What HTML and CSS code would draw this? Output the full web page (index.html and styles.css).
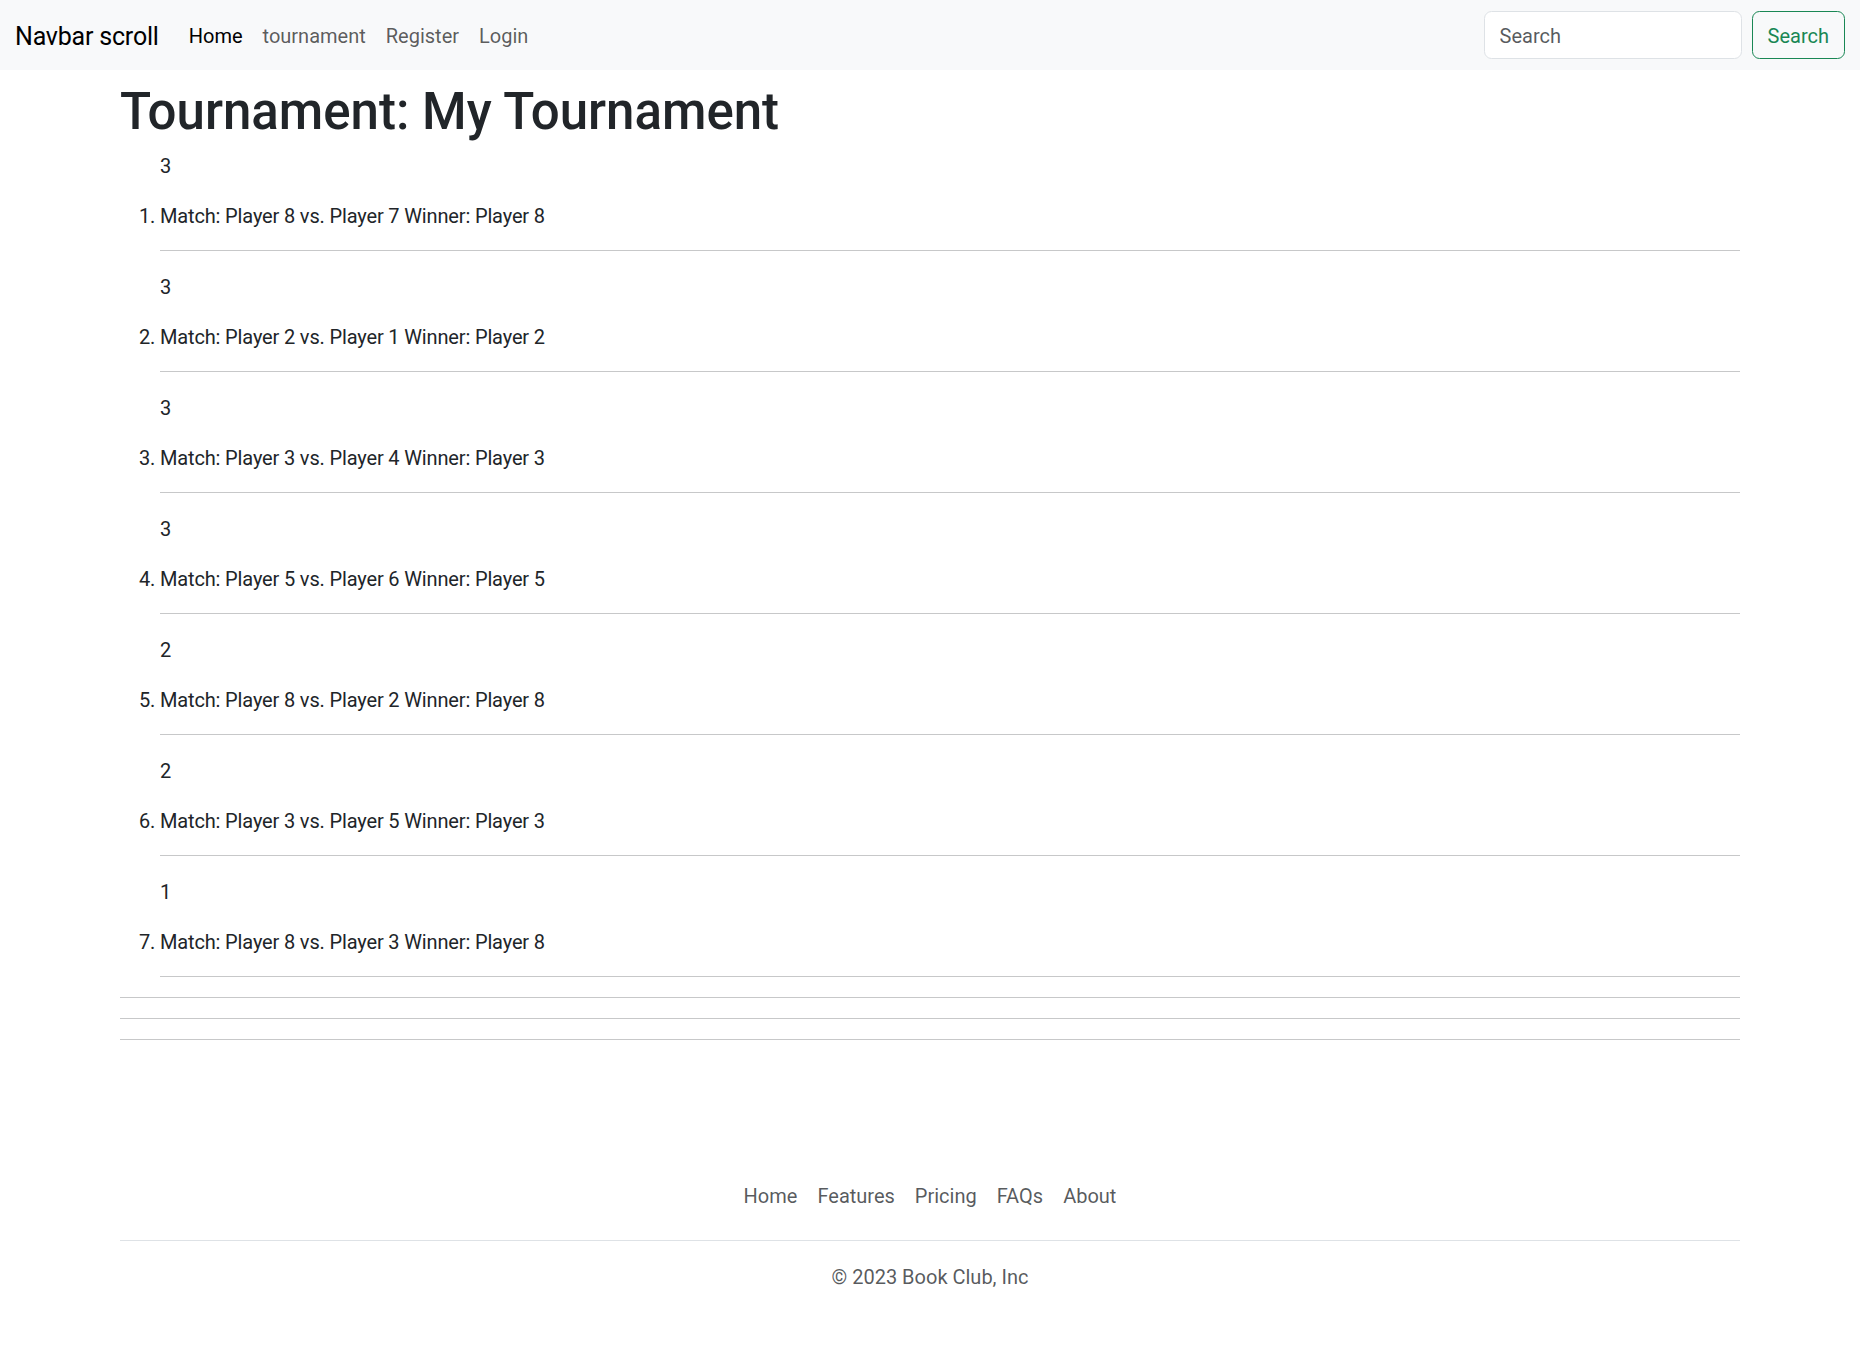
FILE: index.html
```html
<!DOCTYPE html>
<html lang="en">
<head>
<meta charset="utf-8">
<title>Tournament: My Tournament</title>
<link rel="stylesheet" href="styles.css">
</head>
<body>
<nav class="navbar">
  <a class="brand" href="#">Navbar scroll</a>
  <ul class="nav-links">
    <li><a class="nav-link active" href="#">Home</a></li>
    <li><a class="nav-link" href="#">tournament</a></li>
    <li><a class="nav-link" href="#">Register</a></li>
    <li><a class="nav-link" href="#">Login</a></li>
  </ul>
  <form class="search-form">
    <input class="search-input" type="search" placeholder="Search">
    <button class="search-btn" type="button">Search</button>
  </form>
</nav>

<main class="container">
  <h1 class="title">Tournament: My Tournament</h1>
  <ol class="matches">
    <li class="match"><p class="round">3</p><p class="desc">Match: Player 8 vs. Player 7 Winner: Player 8</p><hr class="rule"></li>
    <li class="match"><p class="round">3</p><p class="desc">Match: Player 2 vs. Player 1 Winner: Player 2</p><hr class="rule"></li>
    <li class="match"><p class="round">3</p><p class="desc">Match: Player 3 vs. Player 4 Winner: Player 3</p><hr class="rule"></li>
    <li class="match"><p class="round">3</p><p class="desc">Match: Player 5 vs. Player 6 Winner: Player 5</p><hr class="rule"></li>
    <li class="match"><p class="round">2</p><p class="desc">Match: Player 8 vs. Player 2 Winner: Player 8</p><hr class="rule"></li>
    <li class="match"><p class="round">2</p><p class="desc">Match: Player 3 vs. Player 5 Winner: Player 3</p><hr class="rule"></li>
    <li class="match"><p class="round">1</p><p class="desc">Match: Player 8 vs. Player 3 Winner: Player 8</p><hr class="rule"></li>
  </ol>
  <hr class="rule">
  <hr class="rule">
  <hr class="rule">

  <footer class="footer">
    <ul class="footer-nav">
      <li><a class="footer-link" href="#">Home</a></li>
      <li><a class="footer-link" href="#">Features</a></li>
      <li><a class="footer-link" href="#">Pricing</a></li>
      <li><a class="footer-link" href="#">FAQs</a></li>
      <li><a class="footer-link" href="#">About</a></li>
    </ul>
    <p class="copyright">© 2023 Book Club, Inc</p>
  </footer>
</main>
</body>
</html>
```

FILE: styles.css
```css
* { box-sizing: border-box; }

html, body {
  margin: 0;
  padding: 0;
}

body {
  font-family: "Segoe UI", Roboto, "Open Sans", sans-serif;
  font-size: 20px;
  line-height: 1.5;
  color: #212529;
  background: #fff;
}

a { text-decoration: none; }

/* Navbar */
.navbar {
  display: flex;
  align-items: center;
  height: 70px;
  padding: 10px 15px;
  background: #f8f9fa;
}

.brand {
  font-size: 25px;
  line-height: 37.5px;
  padding: 7.5px 0 5px;
  margin-right: 20px;
  letter-spacing: -0.2px;
  color: #000;
}

.nav-links {
  display: flex;
  list-style: none;
  margin: 0;
  padding: 0;
  flex: 1;
}

.nav-link {
  display: block;
  padding: 11px 10px 9px;
  line-height: 30px;
  color: rgba(0, 0, 0, 0.65);
}

.nav-link.active { color: #000; }

.search-form {
  display: flex;
  gap: 10px;
}

.search-input {
  width: 258px;
  height: 47.5px;
  padding: 8.5px 15px 6.5px;
  font: inherit;
  color: #212529;
  background: #fff;
  border: 1px solid #dee2e6;
  border-radius: 7.5px;
  outline: none;
}

.search-input::placeholder { color: rgba(33, 37, 41, 0.75); }

.search-btn {
  height: 47.5px;
  padding: 8.5px 15px 6.5px;
  font: inherit;
  color: #198754;
  background: transparent;
  border: 1px solid #198754;
  border-radius: 7.5px;
}

/* Main */
.container {
  max-width: 1650px;
  margin: 0 auto;
  padding: 10px 15px 0;
}

.title {
  margin: 0 0 10px;
  padding-top: 3px;
  font-size: 51px;
  font-weight: 500;
  line-height: 57px;
}

.matches {
  margin: 0 0 20px;
  padding-left: 40px;
  letter-spacing: -0.15px;
}

.match {
  display: block;
}

.round {
  margin: 0 0 20px;
  padding-top: 2px;
  line-height: 28px;
}

.desc {
  display: list-item;
  list-style: decimal outside;
  margin: 0 0 20px;
  padding-top: 2px;
  line-height: 28px;
}

.rule {
  height: 0;
  margin: 20px 0;
  border: 0;
  border-top: 1px solid rgba(33, 37, 41, 0.25);
}

/* Footer */
.footer {
  margin-top: 110px;
  padding: 20px 0;
}

.footer-nav {
  display: flex;
  justify-content: center;
  list-style: none;
  margin: 0 0 20px;
  padding: 0 0 20px;
  border-bottom: 1px solid #dee2e6;
}

.footer-link {
  display: block;
  padding: 11px 10px 9px;
  line-height: 30px;
  color: rgba(33, 37, 41, 0.75);
}

.copyright {
  margin: 0 0 20px;
  padding-top: 2px;
  line-height: 28px;
  text-align: center;
  color: rgba(33, 37, 41, 0.75);
}
```
